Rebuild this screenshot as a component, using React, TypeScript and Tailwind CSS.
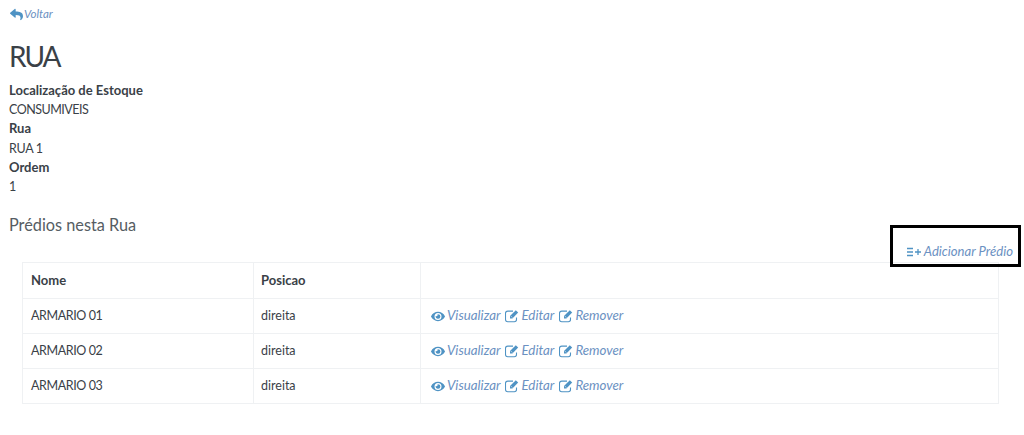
import React from "react";
import { FaReply, FaEye } from "react-icons/fa";

const rows = ["ARMARIO 01", "ARMARIO 02", "ARMARIO 03"];

function EditIcon() {
  return (
    <svg width="14" height="14" viewBox="0 0 14 14" className="block">
      <path d="M11.500 8.500V10.500A2.200 2.200 0 0 1 9.300 12.700H2.700A2.200 2.200 0 0 1 0.500 10.500V4.300A2.200 2.200 0 0 1 2.700 2.100H8" fill="none" stroke="#4f93c4" strokeWidth="1.100" />
      <path d="M5 7L10.800 1.200L13.200 3.600L7.400 9.400H5Z" fill="#4f93c4" />
      <path d="M6 7.200L7.200 8.400" stroke="#ffffff" strokeWidth="0.700" />
    </svg>
  );
}

function Action({ icon, label }: { icon: React.ReactNode; label: string }) {
  return (
    <a className="inline-flex items-center gap-[2px] italic text-[13.300px] text-[#6b91c2]">
      <span className="w-[14px] flex justify-center text-[15px] text-[#4f93c4] not-italic">{icon}</span>
      {label}
    </a>
  );
}

export default function App() {
  return (
    <div className="relative w-[1024px] h-[435px] bg-white overflow-hidden font-['Lato','Noto_Sans',sans-serif] text-[13px] text-[#3a4147]">
      <div className="pl-[9px] pr-[25px]">
        <a className="flex items-center gap-[1px] h-[14px] mt-[7px] ml-[1px] italic text-[11.500px] text-[#6b91c2]">
          <FaReply className="text-[#4f93c4] text-[13px]" />
          Voltar
        </a>
        <h1 className="mt-[18px] text-[28px] leading-[34px] tracking-[-2px] font-normal text-[#3a4147]">RUA</h1>
        <dl className="mt-[8px] leading-[19.200px]">
          <dt className="font-bold">Localização de Estoque</dt>
          <dd className="text-[12.500px] tracking-[-0.500px]">CONSUMIVEIS</dd>
          <dt className="font-bold">Rua</dt>
          <dd className="text-[12.500px] tracking-[-0.300px]">RUA 1</dd>
          <dt className="font-bold">Ordem</dt>
          <dd className="text-[12.500px]">1</dd>
        </dl>
        <h2 className="mt-[19px] text-[16.300px] leading-[20px] font-normal text-[#565d63]">Prédios nesta Rua</h2>
        <div className="flex justify-end h-[18px] mt-[8px] -mr-[14px]">
          <a className="flex items-center gap-[2px] italic text-[13.100px] text-[#6b91c2]">
            <svg width="15" height="10" viewBox="0 0 15 10" fill="none" stroke="#4f93c4" strokeWidth="1.3">
              <path d="M0 1.5h6M0 5h6M0 8.500h6M8 5h6M11 2v6" />
            </svg>
            Adicionar Prédio
          </a>
        </div>
        <table className="ml-[13px] mt-[1px] w-[977px] border-collapse table-fixed">
          <colgroup>
            <col className="w-[231px]" />
            <col className="w-[167px]" />
            <col />
          </colgroup>
          <thead>
            <tr className="h-[36px]">
              <th className="border border-[#eff1f3] px-[8px] text-left font-bold">Nome</th>
              <th className="border border-[#eff1f3] px-[7px] text-left font-bold">Posicao</th>
              <th className="border border-[#eff1f3]" />
            </tr>
          </thead>
          <tbody>
            {rows.map((r) => (
              <tr key={r} className="h-[35px]">
                <td className="border border-[#eff1f3] px-[8px] text-[12.500px] tracking-[-0.400px]">{r}</td>
                <td className="border border-[#eff1f3] px-[7px] text-[12.500px]">direita</td>
                <td className="border border-[#eff1f3] px-[10px]">
                  <div className="flex gap-[5px]">
                    <Action icon={<FaEye />} label="Visualizar" />
                    <Action icon={<EditIcon />} label="Editar" />
                    <Action icon={<EditIcon />} label="Remover" />
                  </div>
                </td>
              </tr>
            ))}
          </tbody>
        </table>
      </div>
      <div className="absolute left-[890px] top-[225px] w-[131px] h-[42px] border-[3px] border-black" />
    </div>
  );
}
